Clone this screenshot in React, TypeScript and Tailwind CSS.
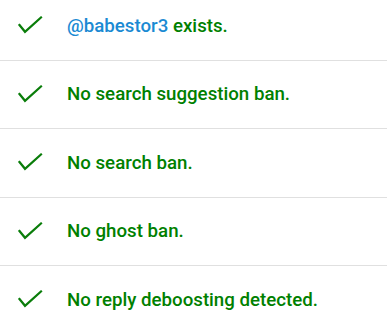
import React from "react";

const rows: { key: string; text: React.ReactNode }[] = [
  {
    key: "exists",
    text: (
      <>
        <span className="text-[#1b8ad3]">@babestor3</span> exists.
      </>
    ),
  },
  { key: "suggestion", text: "No search suggestion ban." },
  { key: "search", text: "No search ban." },
  { key: "ghost", text: "No ghost ban." },
  { key: "reply", text: "No reply deboosting detected." },
];

const Check = () => (
  <svg width="25" height="19" viewBox="0 0 25 19" fill="none" className="shrink-0">
    <polyline
      points="1.5,9 7,15.8 23,1.5"
      stroke="#0a7d0a"
      strokeWidth="2.2"
      strokeLinecap="square"
      strokeLinejoin="miter"
    />
  </svg>
);

export default function App() {
  return (
    <div className="w-[387px] h-[327px] overflow-hidden bg-white font-['Roboto',sans-serif]">
      <div className="-mt-[8px]">
        {rows.map((r) => (
          <div
            key={r.key}
            className="flex items-center h-[68.5px] border-b border-[#e0e0e0] pl-[18px]"
          >
            <Check />
            <span className="ml-[24px] text-[18.7px] font-medium text-[#008000]">
              {r.text}
            </span>
          </div>
        ))}
      </div>
    </div>
  );
}
